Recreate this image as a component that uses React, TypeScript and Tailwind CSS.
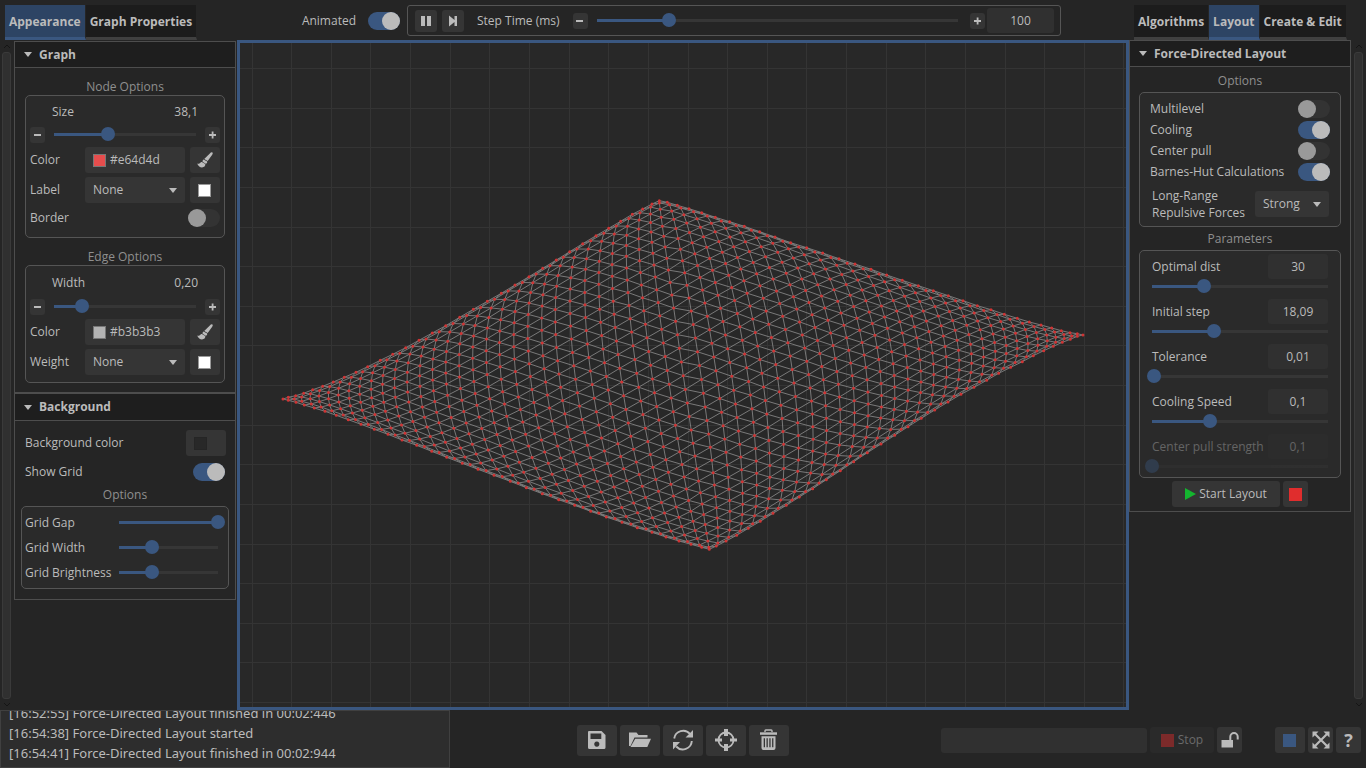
import { useId, useState } from "react";
import type { CSSProperties, ReactNode } from "react";

/* ---------- graph geometry ---------- */

type Point = [number, number];
const N = 32;

// Outline of the mesh, in thirds of a pixel from (270, 180).
const LEFT_TOP: Point[] = [
  [39, 657], [55, 652], [77, 647], [101, 640], [128, 629], [158, 619], [190, 606], [223, 592], [258, 577],
  [293, 560], [331, 541], [368, 523], [407, 503], [447, 481], [487, 459], [527, 437], [569, 412], [610, 388],
  [652, 364], [694, 340], [735, 315], [777, 290], [818, 265], [859, 240], [899, 215], [938, 191], [978, 167],
  [1016, 145], [1052, 124], [1087, 103], [1118, 87], [1146, 72], [1168, 62],
];
const LEFT_BOTTOM: Point[] = [
  [39, 657], [55, 661], [78, 667], [103, 675], [133, 684], [165, 694], [199, 706], [235, 719], [273, 733],
  [313, 748], [354, 763], [396, 780], [440, 796], [485, 814], [530, 832], [577, 850], [624, 868], [672, 886],
  [721, 904], [769, 923], [817, 941], [866, 959], [914, 976], [962, 994], [1009, 1011], [1056, 1027],
  [1102, 1043], [1146, 1057], [1188, 1071], [1227, 1083], [1263, 1093], [1295, 1102], [1318, 1108],
];
// The two right-hand sides, from (660, 180).
const TOP_RIGHT: Point[] = [
  [-2, 62], [22, 67], [52, 76], [87, 86], [125, 98], [166, 112], [209, 125], [253, 139], [299, 155],
  [345, 171], [392, 188], [440, 203], [488, 219], [537, 236], [585, 252], [633, 268], [680, 285], [727, 301],
  [775, 317], [820, 332], [865, 347], [909, 362], [952, 377], [993, 389], [1033, 403], [1072, 415],
  [1108, 426], [1143, 435], [1175, 444], [1204, 452], [1230, 458], [1252, 461], [1269, 465],
];
const BOTTOM_RIGHT: Point[] = [
  [148, 1108], [169, 1098], [198, 1083], [230, 1066], [265, 1045], [301, 1024], [339, 1000], [379, 976],
  [418, 951], [458, 926], [499, 899], [541, 872], [581, 845], [622, 818], [663, 792], [704, 766], [744, 740],
  [784, 715], [824, 690], [864, 666], [903, 643], [942, 622], [980, 601], [1016, 580], [1052, 562],
  [1087, 545], [1120, 527], [1151, 512], [1180, 499], [1207, 487], [1231, 478], [1252, 469], [1269, 465],
];

// How far each diagonal bows out (x, y) and how much its ends are compressed.
const BOW: [number, number, number, number][] = [
  [0, 0, 0, 0.05], [4, -10, 0, 0.06], [8, -28, 0, 0.08], [12, -47.5, 2.5, 0.085], [16, -64, 6, 0.09],
  [20, -78, 7, 0.096], [24, -82, 9, 0.102], [28, -65, 8.5, 0.11], [30, -43, 7, 0.118], [31, -26, 5, 0.124],
  [32, -3, 2, 0.13],
];

function bowAt(d: number) {
  let k = 0;
  while (k < BOW.length - 2 && BOW[k + 1][0] < d) k++;
  const a = BOW[k];
  const b = BOW[k + 1];
  const f = (d - a[0]) / (b[0] - a[0]);
  return [1, 2, 3].map((c) => a[c] + (b[c] - a[c]) * f);
}

function node(i: number, j: number): Point {
  const d = i + j;
  const left = d <= N;
  const k = left ? d : d - N;
  const a = left ? LEFT_TOP[k] : TOP_RIGHT[k];
  const b = left ? LEFT_BOTTOM[k] : BOTTOM_RIGHT[k];
  const steps = left ? d : N - k;
  const t = steps === 0 ? 0 : (left ? j : j - k) / steps;
  const [bx, by, squeeze] = bowAt(steps);
  const g = Math.pow(4 * t * (1 - t), 0.75);
  const sign = left ? 1 : -1;
  const s = t + squeeze * (2 * t - 1) * g;
  const x = a[0] + (b[0] - a[0]) * s + sign * bx * g;
  const y = a[1] + (b[1] - a[1]) * s + sign * by * g;
  return [(left ? 30 : 420) + x / 3, 137 + y / 3];
}

function buildMesh() {
  const at = (p: Point) => `${p[0].toFixed(1)} ${p[1].toFixed(1)}`;
  const edges: string[] = [];
  const dots: string[] = [];
  for (let a = 0; a <= N; a++) {
    let row = "";
    let column = "";
    for (let b = 0; b <= N; b++) {
      row += (b ? "L" : "M") + at(node(a, b));
      column += (b ? "L" : "M") + at(node(b, a));
      dots.push(`M${at(node(a, b))}h0`);
    }
    edges.push(row, column);
  }
  for (let d = 1; d < 2 * N; d++) {
    let line = "";
    for (let j = Math.max(0, d - N); j <= Math.min(N, d); j++) line += (line ? "L" : "M") + at(node(d - j, j));
    edges.push(line);
  }
  return { edges: edges.join(""), dots: dots.join("") };
}

const MESH = buildMesh();
const GRID_STEP = 39.63;

function GraphCanvas() {
  const verticals = Array.from({ length: 80 }, (_, k) => Math.round(11.6 + k * GRID_STEP));
  const horizontals = Array.from({ length: 50 }, (_, k) => Math.round(25 + k * GRID_STEP));
  return (
    <main className="min-w-0 flex-1 overflow-hidden border-[3px] border-[#3a5780] bg-[#282828]">
      <svg className="block h-full w-full" role="img" aria-label="Graph">
        <path
          d={verticals.map((x) => `M${x}.5 0V3000`).join("") + horizontals.map((y) => `M0 ${y}.5H4000`).join("")}
          stroke="#343434"
          fill="none"
        />
        <path d={MESH.edges} stroke="#828282" strokeWidth="0.9" fill="none" />
        <path d={MESH.dots} stroke="#d03434" strokeWidth="3" strokeLinecap="round" fill="none" />
      </svg>
    </main>
  );
}

/* ---------- controls ---------- */

type SliderProps = { label: string; initial: number; className?: string; disabled?: boolean };

function Slider({ label, initial, className = "", disabled }: SliderProps) {
  const [value, setValue] = useState(initial);
  return (
    <input
      type="range"
      aria-label={label}
      min={0}
      max={1000}
      value={value}
      disabled={disabled}
      onChange={(e) => setValue(Number(e.target.value))}
      style={{ "--fill": `calc(7px + (100% - 14px) * ${value / 1000})` } as CSSProperties}
      className={`block h-[14px] min-w-0 appearance-none bg-transparent disabled:opacity-40 [&::-webkit-slider-runnable-track]:h-[3px] [&::-webkit-slider-runnable-track]:bg-[linear-gradient(to_right,transparent_7px,#3a5780_7px,#3a5780_var(--fill),#363636_var(--fill),#363636_calc(100%_-_7px),transparent_calc(100%_-_7px))] [&::-webkit-slider-thumb]:-mt-[6px] [&::-webkit-slider-thumb]:size-[14px] [&::-webkit-slider-thumb]:appearance-none [&::-webkit-slider-thumb]:rounded-full [&::-webkit-slider-thumb]:bg-[#3a5780] ${className}`}
    />
  );
}

function Toggle({ id, on = false }: { id: string; on?: boolean }) {
  return (
    <input
      id={id}
      type="checkbox"
      role="switch"
      defaultChecked={on}
      className="block h-[18px] w-8 shrink-0 appearance-none rounded-full bg-[#333333] before:block before:size-[18px] before:rounded-full before:bg-[#999999] before:content-[''] checked:bg-[#3a5780] checked:before:ml-[14px] checked:before:bg-[#bbbbbb]"
    />
  );
}

function ToggleRow({ label, on, className = "" }: { label: string; on?: boolean; className?: string }) {
  const id = useId();
  return (
    <div className={`flex items-center justify-between ${className}`}>
      <label htmlFor={id}>{label}</label>
      <Toggle id={id} on={on} />
    </div>
  );
}

function Triangle({ className = "" }: { className?: string }) {
  return (
    <svg viewBox="0 0 8 5" className={`h-[5px] w-2 fill-[#bbbbbb] ${className}`} aria-hidden="true">
      <path d="M0 0h8L4 5z" />
    </svg>
  );
}

function Select({ id, value, className = "" }: { id: string; value: string; className?: string }) {
  return (
    <div className={`relative ${className}`}>
      <select id={id} defaultValue={value} className="block h-[26px] w-full appearance-none rounded-[3px] bg-[#353535] px-2">
        <option>{value}</option>
      </select>
      <Triangle className="pointer-events-none absolute top-[11px] right-2" />
    </div>
  );
}

function IconButton({ label, className = "", children, disabled }: { label: string; className?: string; children: ReactNode; disabled?: boolean }) {
  return (
    <button
      type="button"
      aria-label={label}
      disabled={disabled}
      className={`flex shrink-0 items-center justify-center rounded-[3px] bg-[#353535] text-[#bbbbbb] ${className}`}
    >
      {children}
    </button>
  );
}

function StepButton({ kind, label }: { kind: "minus" | "plus"; label: string }) {
  return (
    <IconButton label={label} className="h-4 w-[15px]">
      <svg viewBox="0 0 8 8" className="size-2" aria-hidden="true" fill="currentColor">
        <path d={kind === "minus" ? "M0 3h7v2H0z" : "M0 3h7v2H0zM2.700 0.500h1.800v7H2.700z"} />
      </svg>
    </IconButton>
  );
}

function Brush() {
  return (
    <svg viewBox="0 0 16 16" className="size-4" fill="currentColor" aria-hidden="true">
      <path d="M15.400.500c.6.500.4 1.300-.2 2.300L10.700 9 7.200 7.100 12.600 1.700C13.700.6 14.700.1 15.400.500z" />
      <path d="M6.500 7.600 10.200 9.600c.2 1.100-.4 2-1.500 2.100L5.600 9.800c-.1-1 .1-1.700.9-2.200z" />
      <path d="M4.900 10 8.300 12.100c.3 2-1.200 3.300-3.300 3.300-2.100 0-3.500-1.100-4.900-4 .9.600 1.600.6 2.300.1.900-.8 1.500-1.500 2.500-1.500z" />
    </svg>
  );
}

function WhiteSwatch() {
  return <span className="mr-px size-[13px] border border-[#999999] bg-white" />;
}

function Disclosure({ title, className = "" }: { title: string; className?: string }) {
  return (
    <h2 className={`h-[26px] border-b border-[#4d4d4d] bg-[#1e1e1e] font-bold ${className}`}>
      <button type="button" className="flex h-full w-full items-center gap-[7px] px-[9px]">
        <Triangle />
        {title}
      </button>
    </h2>
  );
}

function Caption({ children, className = "" }: { children: ReactNode; className?: string }) {
  return <h3 className={`text-center leading-4 text-[#8f8f8f] ${className}`}>{children}</h3>;
}

function Group({ children, className = "" }: { children: ReactNode; className?: string }) {
  return <div className={`rounded-[5px] border border-[#555555] bg-[#2a2a2a] ${className}`}>{children}</div>;
}

type StyleGroupProps = {
  caption: string;
  measure: string;
  value: string;
  position: number;
  color: string;
  swatch: string;
  source: string;
  measureClass: string;
  children?: ReactNode;
};

function StyleGroup({ caption, measure, value, position, color, swatch, source, measureClass, children }: StyleGroupProps) {
  const id = useId();
  return (
    <section className="px-[10px]">
      <Caption className="pt-[11px]">{caption}</Caption>
      <Group className="px-1 pb-1">
        <div className={`flex items-center justify-between px-[22px] ${measureClass}`}>
          <span>{measure}</span>
          <output>{value}</output>
        </div>
        <div className="flex items-start gap-[2px]">
          <StepButton kind="minus" label={`Decrease ${measure}`} />
          <Slider label={measure} initial={position} className="flex-1" />
          <StepButton kind="plus" label={`Increase ${measure}`} />
        </div>
        <div className="mt-1 flex items-center">
          <span className="w-[55px]">Color</span>
          <button type="button" className="flex h-[26px] flex-1 items-center gap-1 rounded-[3px] bg-[#353535] px-2">
            <span className={`size-[13px] border border-[#777777] ${swatch}`} />
            {color}
          </button>
          <IconButton label="Pick color" className="ml-[5px] h-[26px] w-[30px]">
            <Brush />
          </IconButton>
        </div>
        <div className="mt-1 flex items-center">
          <label htmlFor={id} className="w-[55px]">
            {source}
          </label>
          <Select id={id} value="None" className="flex-1" />
          <IconButton label={`${source} color`} className="ml-[5px] h-[26px] w-[30px]">
            <WhiteSwatch />
          </IconButton>
        </div>
        {children}
      </Group>
    </section>
  );
}

function GridSlider({ label, position }: { label: string; position: number }) {
  return (
    <div className="flex h-[25px] items-center justify-between">
      <span className="whitespace-nowrap">{label}</span>
      <Slider label={label} initial={position} className="w-[113px]" />
    </div>
  );
}

function ScrollRail({ className = "" }: { className?: string }) {
  return (
    <div className={`flex w-[9px] shrink-0 flex-col items-center gap-[3px] pt-1 pb-[3px] ${className}`} aria-hidden="true">
      <svg viewBox="0 0 8 5" className="h-[5px] w-2 fill-none stroke-[#151515]"><path d="M1 4l3-3 3 3" /></svg>
      <div className="w-full flex-1 rounded-[3px] border border-[#3a3a3a] bg-[#303030]" />
      <svg viewBox="0 0 8 5" className="h-[5px] w-2 fill-none stroke-[#151515]"><path d="M1 1l3 3 3-3" /></svg>
    </div>
  );
}

function Tabs({ items, active, label }: { items: string[]; active: string; label: string }) {
  return (
    <div role="tablist" aria-label={label} className="flex h-[35px] font-bold">
      {items.map((item) => (
        <button
          key={item}
          type="button"
          role="tab"
          aria-selected={item === active}
          className="border-r border-b-[3px] border-[#404040] border-r-[#252525] bg-[#1c1c1c] px-1 pt-px whitespace-nowrap aria-selected:border-b-[#3a5780] aria-selected:bg-[#2d4464]"
        >
          {item}
        </button>
      ))}
    </div>
  );
}

/* ---------- page regions ---------- */

function TopBar() {
  return (
    <header className="flex h-10 shrink-0 items-start pt-[5px]">
      <div className="w-[237px] shrink-0 pl-[5px]">
        <Tabs label="Appearance panels" items={["Appearance", "Graph Properties"]} active="Appearance" />
      </div>
      <div className="flex h-[31px] flex-1 items-center justify-end gap-[7px] pr-[5px]">
        <div className="flex items-center gap-3">
          <label htmlFor="animated">Animated</label>
          <Toggle id="animated" on />
        </div>
        <div className="flex h-[31px] max-w-[654px] flex-1 items-center rounded-[3px] border border-[#555555] pr-[6px] pl-[7px]">
          <IconButton label="Pause" className="size-[22px]">
            <svg viewBox="0 0 12 12" className="size-3" fill="currentColor" aria-hidden="true"><path d="M1 1h4v10H1zM7 1h4v10H7z" /></svg>
          </IconButton>
          <IconButton label="Next step" className="ml-[5px] size-[22px]">
            <svg viewBox="0 0 12 12" className="size-3" fill="currentColor" aria-hidden="true"><path d="M2 .5 7.500 5V1H10v10H7.500V7L2 11.500z" /></svg>
          </IconButton>
          <span className="mx-[13px] whitespace-nowrap">Step Time (ms)</span>
          <StepButton kind="minus" label="Decrease step time" />
          <Slider label="Step Time (ms)" initial={200} className="mr-[5px] ml-[2px] flex-1" />
          <StepButton kind="plus" label="Increase step time" />
          <input aria-label="Step time" defaultValue="100" className="ml-[2px] h-[25px] w-[67px] rounded-[3px] bg-[#303030] text-center" />
        </div>
      </div>
      <div className="w-[300px] shrink-0 pl-[68px]">
        <Tabs label="Layout panels" items={["Algorithms", "Layout", "Create & Edit"]} active="Layout" />
      </div>
    </header>
  );
}

function AppearancePanel() {
  return (
    <aside className="flex w-[237px] shrink-0 gap-[3px] pr-[1px] pl-[2px]">
      <ScrollRail />
      <div className="mt-[1px] min-w-0 flex-1 self-start border border-[#4d4d4d] pb-[10px]">
        <Disclosure title="Graph" />
        <StyleGroup caption="Node Options" measure="Size" value="38,1" position={381} color="#e64d4d" swatch="bg-[#e64d4d]" source="Label" measureClass="h-[31px]">
          <ToggleRow label="Border" className="h-[30px]" />
        </StyleGroup>
        <StyleGroup caption="Edge Options" measure="Width" value="0,20" position={200} color="#b3b3b3" swatch="bg-[#b3b3b3]" source="Weight" measureClass="h-[33px]">
          <div className="h-[3px]" />
        </StyleGroup>
        <Disclosure title="Background" className="mt-[9px] box-content border-t-2" />
        <div className="flex items-center justify-between pt-[9px] pr-[9px] pl-[10px]">
          <span>Background color</span>
          <button type="button" aria-label="Background color" className="h-[26px] w-10 rounded-[3px] bg-[#353535] px-2">
            <span className="block size-[13px] border border-[#252525] bg-[#282828]" />
          </button>
        </div>
        <ToggleRow label="Show Grid" on className="h-[31px] px-[10px]" />
        <Caption>Options</Caption>
        <Group className="mx-[6px] mt-[3px] px-[3px] py-[3px]">
          <GridSlider label="Grid Gap" position={1000} />
          <GridSlider label="Grid Width" position={330} />
          <GridSlider label="Grid Brightness" position={330} />
        </Group>
      </div>
    </aside>
  );
}

const PARAMETERS = [
  { label: "Optimal dist", value: "30", position: 293 },
  { label: "Initial step", value: "18,09", position: 350 },
  { label: "Tolerance", value: "0,01", position: 10 },
  { label: "Cooling Speed", value: "0,1", position: 330 },
  { label: "Center pull strength", value: "0,1", position: 0, disabled: true },
];

function LayoutPanel() {
  return (
    <aside className="flex w-[237px] shrink-0 gap-[3px] pr-[3px]">
      <div className="min-w-0 flex-1 self-start border border-[#4d4d4d] pb-1">
        <Disclosure title="Force-Directed Layout" />
        <Caption className="pt-[6px]">Options</Caption>
        <Group className="mx-[9px] mt-[3px] px-[10px] pt-[5px] pb-[5px]">
          <ToggleRow label="Multilevel" className="h-[21px]" />
          <ToggleRow label="Cooling" on className="h-[21px]" />
          <ToggleRow label="Center pull" className="h-[21px]" />
          <ToggleRow label="Barnes-Hut Calculations" on className="h-[21px]" />
          <div className="mt-[5px] flex items-center justify-between pl-[2px]">
            <label htmlFor="forces" className="leading-[17px]">
              Long-Range
              <br />
              Repulsive Forces
            </label>
            <Select id="forces" value="Strong" className="mr-[1px] w-[74px]" />
          </div>
        </Group>
        <Caption className="pt-1">Parameters</Caption>
        <Group className="mx-[9px] mt-[3px] flex flex-col gap-[6px] px-[12px] pt-[3px] pb-1">
          {PARAMETERS.map((p) => (
            <div key={p.label}>
              <label className={`flex items-center justify-between ${p.disabled ? "opacity-40" : ""}`}>
                {p.label}
                <input defaultValue={p.value} disabled={p.disabled} className="h-[25px] w-[60px] rounded-[3px] bg-[#303030] text-center" />
              </label>
              <div className="-mx-[7px] flex">
                <Slider label={p.label} initial={p.position} disabled={p.disabled} className="flex-1" />
              </div>
            </div>
          ))}
        </Group>
        <div className="mt-[3px] flex justify-center gap-[3px]">
          <button type="button" className="flex h-[26px] w-[108px] items-center justify-center gap-[3px] rounded-[3px] bg-[#353535]">
            <svg viewBox="0 0 11 12" className="h-3 w-[11px] fill-[#14b52f]" aria-hidden="true"><path d="M0 0l11 6L0 12z" /></svg>
            Start Layout
          </button>
          <IconButton label="Stop layout" className="h-[26px] w-[25px]">
            <span className="size-[13px] bg-[#e02d2d]" />
          </IconButton>
        </div>
      </div>
      <ScrollRail />
    </aside>
  );
}

function ToolIcon({ children }: { children: ReactNode }) {
  return (
    <svg viewBox="0 0 22 22" className="size-[22px]" fill="currentColor" aria-hidden="true">
      {children}
    </svg>
  );
}

const TOOLS: { label: string; icon: ReactNode }[] = [
  {
    label: "Save",
    icon: <path fillRule="evenodd" d="M3 2h12.500l4 4v12.500q0 1.500-1.500 1.500H3.500Q2 20 2 18.500V3q0-1 1-1zM4.500 4.500v5.500h10.800V4.500zM10.800 12.500a2.600 2.600 0 1 0 .01 0z" />,
  },
  {
    label: "Open",
    icon: (
      <>
        <path d="M0 3.500h7.500l2 2.500h9v2.500H5.500L1.500 17H0z" />
        <path d="M6.200 9.800H22L18.300 18H1.500z" />
      </>
    ),
  },
  {
    label: "Refresh",
    icon: (
      <>
        <path d="M2.200 9.500A9 9 0 0 1 18 5M19.800 12A9 9 0 0 1 4.200 17.500" fill="none" stroke="currentColor" strokeWidth="1.900" />
        <path d="M21 1v7.500h-7.500zM1 20.500V13h7z" />
      </>
    ),
  },
  {
    label: "Center view",
    icon: (
      <>
        <circle cx="11" cy="11" r="7.500" fill="none" stroke="currentColor" strokeWidth="1.800" />
        <path d="M9 0h4v7H9zM9 15h4v7H9zM0 9.400h7v3.200H0zM15 9.400h7v3.200h-7z" />
      </>
    ),
  },
  {
    label: "Delete",
    icon: (
      <>
        <path d="M7 3V1.800q0-.8.8-.8h5.400q.8 0 .8.800V3" fill="none" stroke="currentColor" strokeWidth="1.400" />
        <path d="M2 3.300h17v2.500H2z" />
        <path fillRule="evenodd" d="M3.500 7.300h14V19q0 2-2 2h-10q-2 0-2-2zM5.700 9.200v9H7v-9zM8.500 9.200v9h1.300v-9zM11.300 9.200v9h1.300v-9zM14.100 9.200v9h1.300v-9z" />
      </>
    ),
  },
];

function BottomBar() {
  return (
    <footer className="grid h-[58px] shrink-0 grid-cols-[1fr_auto_1fr] items-center">
      <div role="log" className="flex h-full w-[450px] flex-col justify-end overflow-hidden border border-[#404040] bg-[#2d2d2d] px-2 pb-1 font-['Noto_Sans','Open_Sans',sans-serif] text-[13px] leading-5 whitespace-nowrap">
        <p>[16:52:55] Force-Directed Layout finished in 00:02:446</p>
        <p>[16:54:38] Force-Directed Layout started</p>
        <p>[16:54:41] Force-Directed Layout finished in 00:02:944</p>
      </div>
      <div className="flex gap-[3px] pt-[2px]">
        {TOOLS.map((tool) => (
          <IconButton key={tool.label} label={tool.label} className="h-[31px] w-10">
            <ToolIcon>{tool.icon}</ToolIcon>
          </IconButton>
        ))}
      </div>
      <div className="flex items-center justify-end gap-[3px] pt-[2px] pr-[5px]">
        <div role="progressbar" aria-label="Progress" className="h-[25px] w-[206px] rounded-[3px] bg-[#303030]" />
        <button type="button" disabled className="flex h-[26px] w-16 items-center justify-center gap-1 rounded-[3px] bg-[#2a2a2a] text-[#6b6b6b]">
          <span className="size-[13px] bg-[#7c2a2a]" />
          Stop
        </button>
        <IconButton label="Unlock" className="mr-[30px] h-[26px] w-[25px]">
          <svg viewBox="0 0 18 16" className="h-4 w-[18px]" aria-hidden="true">
            <path d="M0.500 8h11.500v7.500H0.500z" fill="currentColor" />
            <path d="M9.300 8.500V4.800a3.700 3.700 0 0 1 7.400 0V7.500" fill="none" stroke="currentColor" strokeWidth="2" />
          </svg>
        </IconButton>
        <IconButton label="Theme color" className="h-[26px] w-[30px]">
          <span className="mr-px size-[13px] bg-[#3a5780]" />
        </IconButton>
        <IconButton label="Fit to screen" className="h-[26px] w-[25px]">
          <svg viewBox="0 0 18 18" className="size-[18px]" fill="currentColor" aria-hidden="true">
            <path d="M.5.500h6L.5 6.500zM17.500.500v6l-6-6zM.5 17.500v-6l6 6zM17.500 17.500h-6l6-6z" />
            <path d="M3 3l12 12M15 3L3 15" stroke="currentColor" strokeWidth="2.200" />
          </svg>
        </IconButton>
        <IconButton label="Help" className="h-[26px] w-[25px] text-[18px] font-bold">
          ?
        </IconButton>
      </div>
    </footer>
  );
}

export default function App() {
  return (
    <div className="flex h-screen flex-col overflow-hidden bg-[#252525] font-['Open_Sans','Noto_Sans',sans-serif] text-[12px] text-[#bbbbbb]">
      <TopBar />
      <div className="flex min-h-0 flex-1">
        <AppearancePanel />
        <GraphCanvas />
        <LayoutPanel />
      </div>
      <BottomBar />
    </div>
  );
}
